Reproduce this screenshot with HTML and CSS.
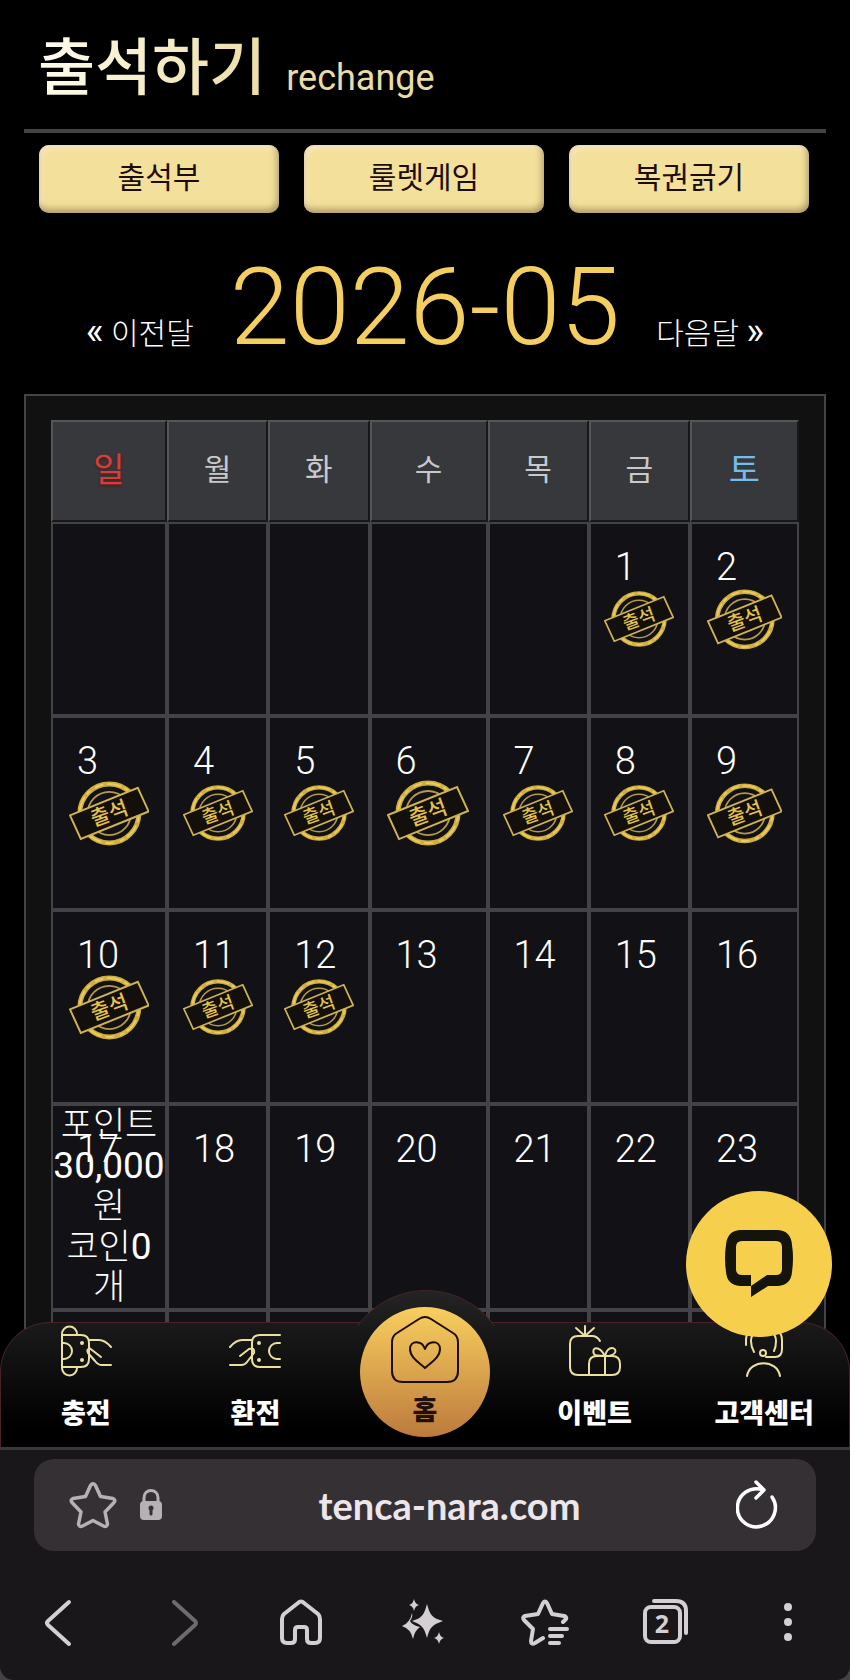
FILE: index.html
```
<!DOCTYPE html>
<html lang="ko">
<head>
    <meta charset="UTF-8">
    <meta name="viewport" content="width=device-width, initial-scale=1">
    <title>출석하기</title>
    <link rel="stylesheet" href="styles.css">
</head>
<body>
    <svg class="defs" aria-hidden="true">
        <symbol id="stamp" viewBox="8 9 82 68">
            <circle cx="49" cy="43" r="30" fill="none" stroke="#cfae3c" stroke-width="5"/>
            <circle cx="49" cy="43" r="30" fill="none" stroke="#e8cc62" stroke-width="2" stroke-dasharray="9 4 15 3 5 6"/>
            <circle cx="49" cy="43" r="22" fill="none" stroke="#b59b45" stroke-width="1.8"/>
            <path d="M9 45 78 17 89 41 20 69Z" fill="#120f0c" stroke="#cfb352" stroke-width="2"/>
            <text x="49" y="50" transform="rotate(-20 49 43)" text-anchor="middle" font-size="21" font-weight="500" fill="#e3c34b">출석</text>
        </symbol>
    </svg>

    <div class="page">
        <main class="content">
            <header class="title">
                <h1>출석하기</h1>
                <span>rechange</span>
            </header>

            <div class="menu">
                <button type="button">출석부</button>
                <button type="button">룰렛게임</button>
                <button type="button">복권긁기</button>
            </div>

            <div class="month">
                <a href="#"><b>«</b> 이전달</a>
                <h2>2026-05</h2>
                <a href="#">다음달 <b>»</b></a>
            </div>

            <div class="calendar">
                <table>
                    <colgroup>
                        <col class="col-sun"><col><col><col class="col-wed"><col><col><col class="col-sat">
                    </colgroup>
                    <thead>
                        <tr>
                            <th class="sun">일</th><th>월</th><th>화</th><th>수</th><th>목</th><th>금</th><th class="sat">토</th>
                        </tr>
                    </thead>
                    <tbody>
                        <tr>
                            <td></td><td></td><td></td><td></td><td></td>
                            <td><div class="day"><span>1</span><svg><use href="#stamp"/></svg></div></td>
                            <td><div class="day"><span>2</span><svg><use href="#stamp"/></svg></div></td>
                        </tr>
                        <tr>
                            <td><div class="day"><span>3</span><svg><use href="#stamp"/></svg></div></td>
                            <td><div class="day"><span>4</span><svg><use href="#stamp"/></svg></div></td>
                            <td><div class="day"><span>5</span><svg><use href="#stamp"/></svg></div></td>
                            <td><div class="day"><span>6</span><svg><use href="#stamp"/></svg></div></td>
                            <td><div class="day"><span>7</span><svg><use href="#stamp"/></svg></div></td>
                            <td><div class="day"><span>8</span><svg><use href="#stamp"/></svg></div></td>
                            <td><div class="day"><span>9</span><svg><use href="#stamp"/></svg></div></td>
                        </tr>
                        <tr>
                            <td><div class="day"><span>10</span><svg><use href="#stamp"/></svg></div></td>
                            <td><div class="day"><span>11</span><svg><use href="#stamp"/></svg></div></td>
                            <td><div class="day"><span>12</span><svg><use href="#stamp"/></svg></div></td>
                            <td><div class="day"><span>13</span></div></td>
                            <td><div class="day"><span>14</span></div></td>
                            <td><div class="day"><span>15</span></div></td>
                            <td><div class="day"><span>16</span></div></td>
                        </tr>
                        <tr>
                            <td><div class="day"><span>17</span><p>포인트<br><b>30,000</b><br>원<br>코인<b>0</b><br>개</p></div></td>
                            <td><div class="day"><span>18</span></div></td>
                            <td><div class="day"><span>19</span></div></td>
                            <td><div class="day"><span>20</span></div></td>
                            <td><div class="day"><span>21</span></div></td>
                            <td><div class="day"><span>22</span></div></td>
                            <td><div class="day"><span>23</span></div></td>
                        </tr>
                        <tr>
                            <td></td><td></td><td></td><td></td><td></td><td></td><td></td>
                        </tr>
                    </tbody>
                </table>
            </div>
        </main>

        <nav class="tabbar">
            <a href="#">
                <svg viewBox="0 0 52 52">
                    <path d="M2 9A7.500 7.500 0 0 1 17 9M2 43A7.500 7.500 0 0 0 17 43M2 9V43M2 10H21Q29 10 29 18V34Q29 42 21 42H2M2 18H4A7.500 7.500 0 0 1 4 34H2M29 15H39Q45 15 51 22M28 28Q26 24 30 23.500L41 32M28 28 35 36Q38 40 42 40H51"/>
                    <circle cx="22" cy="18" r="1"/><circle cx="22" cy="35" r="1"/>
                </svg>
                <span>충전</span>
            </a>
            <a href="#">
                <svg viewBox="0 0 52 52">
                    <path d="M51 10H31Q23 10 23 18V34Q23 42 31 42H51M51 18H48A7.500 7.500 0 0 0 48 34H51M23 15H13Q7 15 1 22M11 31 20 24Q26 22 25 28L18 37Q16 40 12 40H1"/>
                    <circle cx="30" cy="18" r="1"/><circle cx="30" cy="35" r="1"/>
                </svg>
                <span>환전</span>
            </a>
            <a href="#" class="home">
                <svg viewBox="0 0 70 70">
                    <path d="M29 4Q35 0 41 4L63 18Q68 21 68 27V56Q68 67 57 67H13Q2 67 2 56V27Q2 21 7 18ZM35 53C30 48 20 43 20 34 20 25 32 25 35 34 38 25 50 25 50 34 50 43 40 48 35 53Z"/>
                </svg>
                <span>홈</span>
            </a>
            <a href="#">
                <svg viewBox="0 0 52 52">
                    <path d="M31 16Q28 11 23 11H9Q1 11 1 19V42Q1 50 9 50H43Q51 50 51 42V39Q51 31 43 31H28Q20 31 20 39V50M16 11V1M16 11 7 3M16 11 25 3M36 50V31C30 20 22 22 25 29Q26 31 36 31C49 31 48 23 43 23Q38 23 36 31"/>
                </svg>
                <span>이벤트</span>
            </a>
            <a href="#">
                <svg viewBox="0 0 52 52">
                    <path d="M8 20V15C8-4 44-4 44 15V24Q44 32 37 32H28M16 27Q13 22 13 16C13 1 38 1 38 16Q38 22 36 26M9 51C12 34 39 34 42 51"/>
                    <circle cx="25" cy="28" r="3"/>
                </svg>
                <span>고객센터</span>
            </a>
        </nav>

        <button type="button" class="chat" aria-label="채팅">
            <svg viewBox="0 0 68 68">
                <path d="M15 0Q34-1 53 0 66 1 67 15 69 28 67 42 66 55 53 56H43L26 67V56H15Q2 55 1 42-1 28 1 15 2 1 15 0ZM17 11Q11 11 11 17V39Q11 45 17 45H26V56L42 45H51Q57 45 57 39V17Q57 11 51 11Z" fill="#14140c" fill-rule="evenodd"/>
            </svg>
        </button>
    </div>

    <footer class="browser">
        <div class="toolbar">
            <form class="address">
                <button type="button" aria-label="북마크">
                    <svg width="48" height="48" viewBox="0 0 48 48" stroke="#b5b1b4" stroke-width="3.500">
                        <path d="M21.500 4.500Q24 1 26.500 4.500L31.500 15.500 44 17.500Q47 19 45 21.500L36 31 38.500 43Q38 46.500 34.500 45L24 39.500 13.500 45Q10 46.500 9.500 43L12 31 3 21.500Q1 19 4 17.500L16.500 15.500Z"/>
                    </svg>
                </button>
                <svg class="lock" width="24" height="32" viewBox="0 0 24 32">
                    <path d="M5 14V9C5-1 19-1 19 9V14" fill="none" stroke="#b5b1b4" stroke-width="3"/>
                    <rect x="1" y="12" width="22" height="19" rx="4" fill="#b5b1b4"/>
                    <path d="M12 19V25" stroke="#353034" stroke-width="3"/><circle cx="12" cy="19" r="2.500" fill="#353034"/>
                </svg>
                <input type="text" value="tenca-nara.com" aria-label="주소">
                <button type="button" aria-label="새로고침">
                    <svg width="42" height="50" viewBox="0 0 42 50" stroke="#fff" stroke-width="3.500">
                        <path d="M36 17A19 19 0 1 1 27 10M20 2 28 10 20 18"/>
                    </svg>
                </button>
            </form>
            <div class="controls">
                <button type="button" aria-label="뒤로">
                    <svg width="48" height="48" viewBox="0 0 48 48"><path d="M35 3 14 22Q12 24 14 26L35 45"/></svg>
                </button>
                <button type="button" class="off" aria-label="앞으로">
                    <svg width="48" height="48" viewBox="0 0 48 48"><path d="M18 3 39 22Q41 24 39 26L18 45"/></svg>
                </button>
                <button type="button" aria-label="홈">
                    <svg width="48" height="48" viewBox="0 0 48 48"><path d="M21 4Q24 1 27 4L41 15Q43 17 43 20V39Q43 44 38 44H34Q30 44 30 40V31Q30 28 27 28H21Q18 28 18 31V40Q18 44 14 44H10Q5 44 5 39V20Q5 17 7 15Z"/></svg>
                </button>
                <button type="button" aria-label="AI">
                    <svg width="48" height="48" viewBox="0 0 48 48" class="solid"><path d="M28 5C31 16 33 19 44 22 33 26 31 28 28 39 25 28 23 26 13 22 23 19 25 16 28 5ZM15 0Q16 5 20 6 16 7 15 12 14 7 10 6 14 5 15 0ZM13 14Q14 18 11 22 13 26 21 28 16 31 14 40 12 30 3 27 11 24 13 14ZM40 33Q41 38 45 39 41 40 40 45 39 40 35 39 39 38 40 33Z"/></svg>
                </button>
                <button type="button" aria-label="북마크 목록">
                    <svg width="48" height="48" viewBox="0 0 48 48"><path d="M42 23 45 20Q46 18 43 17L31 15 26 4Q24 1 22 4L17 15 4 17Q1 18 3 21L12 30 10 42Q10 46 14 44L22 39M29 30H46M29 37H41M29 44H38"/></svg>
                </button>
                <button type="button" aria-label="탭">
                    <svg width="48" height="48" viewBox="0 0 48 48"><rect x="3" y="8" width="35" height="35" rx="6"/><path d="M12 2H34Q44 2 44 12V34"/><text x="20" y="34">2</text></svg>
                </button>
                <button type="button" aria-label="메뉴">
                    <svg width="48" height="48" viewBox="0 0 48 48" class="solid"><circle cx="24" cy="8" r="4"/><circle cx="24" cy="23" r="4"/><circle cx="24" cy="38" r="4"/></svg>
                </button>
            </div>
        </div>
    </footer>
</body>
</html>
```
FILE: styles.css
```
* {
    box-sizing: border-box;
}

body {
    margin: 0;
    height: 100vh;
    display: flex;
    flex-direction: column;
    background: #000;
    color: #fff;
    font-family: Roboto, "Noto Sans CJK KR", sans-serif;
    overflow: hidden;
}

h1, h2, p {
    margin: 0;
}

a {
    color: inherit;
    text-decoration: none;
}

button {
    border: none;
    padding: 0;
    background: none;
    font: inherit;
    cursor: pointer;
}

svg {
    display: block;
}

.defs {
    position: absolute;
    width: 0;
    height: 0;
}

.page {
    position: relative;
    flex: 1;
    min-height: 0;
    overflow: hidden;
}

.content {
    padding: 0 24px;
}

/* title */
.title {
    display: flex;
    align-items: baseline;
    gap: 20px;
    padding: 24px 14px 15px;
    border-bottom: 4px solid #444;
}

.title h1 {
    font-size: 62px;
    font-weight: 500;
    line-height: 90px;
    background: linear-gradient(100deg, #fffdf0, #ebdca0);
    -webkit-background-clip: text;
    background-clip: text;
    color: transparent;
}

.title span {
    font-size: 36px;
    font-weight: 400;
    color: #e9dca8;
}

.menu {
    display: grid;
    grid-template-columns: repeat(3, 1fr);
    gap: 25px;
    padding: 12px 17px 0 15px;
}

.menu button {
    height: 68px;
    padding-bottom: 9px;
    border-radius: 10px;
    background: #f3e09a;
    box-shadow: inset -2px -4px 6px rgba(110, 90, 50, 0.5), inset 3px 4px 5px rgba(250, 232, 200, 0.8);
    color: #1c0c0c;
    font-size: 30px;
}

.month {
    display: flex;
    justify-content: center;
    align-items: baseline;
    gap: 36px;
    padding: 34px 0 27px;
}

.month h2 {
    font-size: 108px;
    font-weight: 300;
    line-height: 120px;
    color: #f4cf60;
}

.month a {
    font-size: 30px;
    font-weight: 300;
}

.month b {
    font-size: 38px;
    font-weight: 400;
    line-height: 30px;
}

/* calendar */
.calendar {
    padding: 24px 25px;
    border: 2px solid #444;
    background: #111;
}

table {
    width: 100%;
    table-layout: fixed;
    border-collapse: separate;
    border-spacing: 0;
}

.col-sun {
    width: 116px;
}

.col-wed {
    width: 118px;
}

.col-sat {
    width: 109px;
}

th {
    height: 102px;
    padding: 0 0 8px;
    border: 2px solid #17181a;
    border-top-color: #55565a;
    border-left-color: #55565a;
    background: #37383c;
    color: #c9c9cc;
    font-size: 30px;
    font-weight: 400;
}

.sun {
    color: #d0413c;
    font-size: 34px;
    text-shadow: 0 2px 3px #5e1717;
}

.sat {
    color: #74bde8;
    font-size: 34px;
}

td {
    height: 194px;
    padding: 0;
    border: 2px solid #434246;
    background: #121115;
    vertical-align: top;
}

.day {
    display: grid;
    min-height: 190px;
}

.day > * {
    grid-area: 1 / 1;
}

.day span {
    padding: 20px 0 0 24px;
    font-size: 38px;
    font-weight: 300;
    line-height: 46px;
}

.day svg {
    place-self: center;
    width: 72%;
    aspect-ratio: 82 / 68;
}

.day p {
    text-align: center;
    font-size: 35px;
    font-weight: 300;
    line-height: 40px;
}

.day b {
    font-size: 37px;
    font-weight: 400;
}

/* bottom tabs */
.tabbar {
    position: absolute;
    left: 0;
    right: 0;
    bottom: 0;
    display: grid;
    grid-template-columns: repeat(5, 1fr);
    height: 125px;
    border: 1px solid #4a2226;
    border-bottom: none;
    border-radius: 50px 50px 0 0;
    background: linear-gradient(#191a19, #000 85%);
}

/* only the part above the bar is shown */
.tabbar::before {
    content: "";
    position: absolute;
    left: 50%;
    top: -33px;
    width: 166px;
    height: 166px;
    margin-left: -83px;
    border: 1px solid #4a2226;
    border-radius: 50%;
    background: linear-gradient(#232423, #191a19 22%);
    clip-path: inset(0 0 132px 0);
}

.tabbar a {
    display: flex;
    flex-direction: column;
    align-items: center;
    gap: 17px;
    padding-top: 2px;
    font-size: 27px;
    font-weight: 900;
    line-height: 40px;
}

.tabbar svg {
    width: 52px;
    height: 52px;
    fill: none;
    stroke: #ece0a0;
    stroke-width: 2;
    stroke-linecap: round;
    stroke-linejoin: round;
    overflow: visible;
}

.tabbar .home {
    position: relative;
    justify-self: center;
    width: 130px;
    height: 130px;
    margin-top: -16px;
    padding-top: 8px;
    gap: 6px;
    border-radius: 50%;
    background: linear-gradient(#f8cf5e, #bd7a3d);
    color: #22100c;
}

.home svg {
    width: 70px;
    height: 70px;
    stroke: #1b0c08;
}

.chat {
    position: absolute;
    right: 18px;
    bottom: 110px;
    display: flex;
    align-items: center;
    justify-content: center;
    width: 146px;
    height: 146px;
    border-radius: 50%;
    background: #f6d04d;
}

.chat svg {
    width: 68px;
    height: 68px;
}

/* browser bar */
.browser {
    background: #444245;
}

.toolbar {
    padding: 9px 34px 33px;
    border-top: 3px solid #3a383a;
    border-radius: 0 0 14px 14px;
    background: #1a171b;
}

.address {
    display: flex;
    align-items: center;
    height: 92px;
    padding: 0 38px 0 35px;
    border-radius: 20px;
    background: #353034;
}

.address svg {
    fill: none;
    stroke-linecap: round;
    stroke-linejoin: round;
}

.lock {
    margin-left: 22px;
}

.address input {
    flex: 1;
    min-width: 0;
    border: none;
    background: none;
    color: #ece6ea;
    font-family: Lato, sans-serif;
    font-size: 38px;
    font-weight: 700;
    text-align: center;
}

.controls {
    display: flex;
    justify-content: space-between;
    padding: 48px 4px 0 0;
}

.controls svg {
    fill: none;
    stroke: #d4cfd3;
    stroke-width: 4;
    stroke-linecap: round;
    stroke-linejoin: round;
}

.controls .off {
    opacity: 0.45;
}

.controls .solid {
    fill: #d4cfd3;
    stroke: none;
}

.controls text {
    fill: #d4cfd3;
    stroke: none;
    font-family: "Open Sans", sans-serif;
    font-size: 25px;
    font-weight: 700;
    text-anchor: middle;
}
```
